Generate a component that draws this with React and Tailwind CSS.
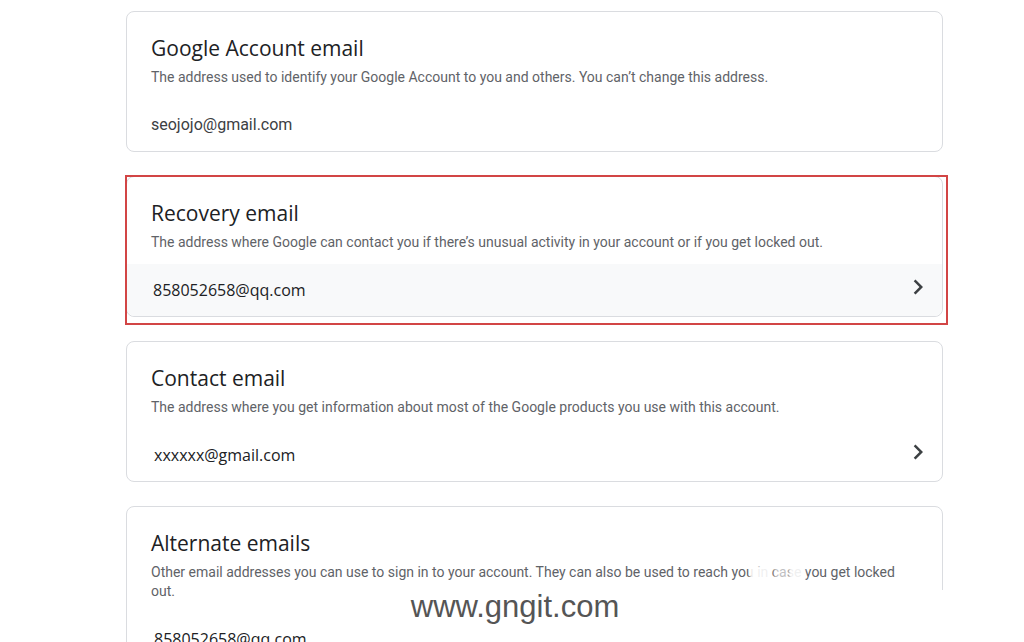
import React from "react";

const Chevron = () => (
  <svg width="30" height="30" viewBox="0 0 24 24" className="mb-[6px] text-[#3c4043]">
    <path d="M10 6L8.59 7.41 13.17 12l-4.58 4.59L10 18l6-6z" fill="currentColor" />
  </svg>
);

function Card({ title, desc, value, chevron, hover, valueClass }) {
  return (
    <div className="relative rounded-lg border border-[#dadce0] bg-white">
      <div className="px-6 pt-[22px]">
        <div className="text-[21px] leading-7 text-[#202124]" style={{ fontFamily: '"Open Sans", Roboto, sans-serif' }}>
          {title}
        </div>
        <div className="mt-[6px] text-[14px] leading-[19px] text-[#5f6368]" style={{ fontFamily: 'Roboto, "Liberation Sans", sans-serif' }}>
          {desc}
        </div>
      </div>
      <div className={`mt-[12px] flex h-[52px] items-center justify-between pl-6 pr-[9px] ${hover ? "rounded-b-lg bg-[#f8f9fa]" : ""}`}>
        <span className={valueClass}>{value}</span>
        {chevron && <Chevron />}
      </div>
    </div>
  );
}

export default function App() {
  return (
    <div className="relative h-[642px] w-[1024px] overflow-hidden bg-white">
      <div className="ml-[126px] mt-[11px] flex w-[817px] flex-col gap-6">
        <Card
          title="Google Account email"
          desc="The address used to identify your Google Account to you and others. You can’t change this address."
          value="seojojo@gmail.com"
          valueClass="text-[16px] text-[#3c4043] font-[Roboto]"
        />
        <div className="relative">
          <Card
            title="Recovery email"
            desc="The address where Google can contact you if there’s unusual activity in your account or if you get locked out."
            value="858052658@qq.com"
            chevron
            hover
            valueClass="pl-[2px] text-[16px] text-[#202124] font-['Open_Sans']"
          />
          <div className="pointer-events-none absolute -top-[1px] -right-[5px] -bottom-[8px] -left-[1px] border-[2.5px] border-[#d24545]" />
        </div>
        <Card
          title="Contact email"
          desc="The address where you get information about most of the Google products you use with this account."
          value="xxxxxx@gmail.com"
          chevron
          valueClass="pl-[3px] text-[16px] text-[#202124] font-['Open_Sans']"
        />
        <Card
          title="Alternate emails"
          desc="Other email addresses you can use to sign in to your account. They can also be used to reach you in case you get locked out."
          value="858052658@qq.com"
          valueClass="pl-[3px] text-[16px] text-[#202124] font-['Open_Sans']"
        />
      </div>
      <div className="absolute left-[750px] top-[566px] h-[18px] w-[20px] bg-white/90 blur-[1px]" />
      <div className="absolute left-[774px] top-[566px] h-[18px] w-[14px] bg-white/60 blur-[1px]" />
      <div className="absolute left-[789px] top-[566px] h-[18px] w-[16px] bg-white/90 blur-[1px]" />
      <div className="absolute left-[932px] top-[590px] h-[52px] w-[30px] bg-white" />
      <div className="absolute left-[370px] top-[588px] flex h-[36px] w-[290px] items-center justify-center bg-white/95">
        <span className="text-[31px] leading-none text-[#555555]" style={{ fontFamily: '"Liberation Sans", Arial, sans-serif' }}>
          www.gngit.com
        </span>
      </div>
    </div>
  );
}
